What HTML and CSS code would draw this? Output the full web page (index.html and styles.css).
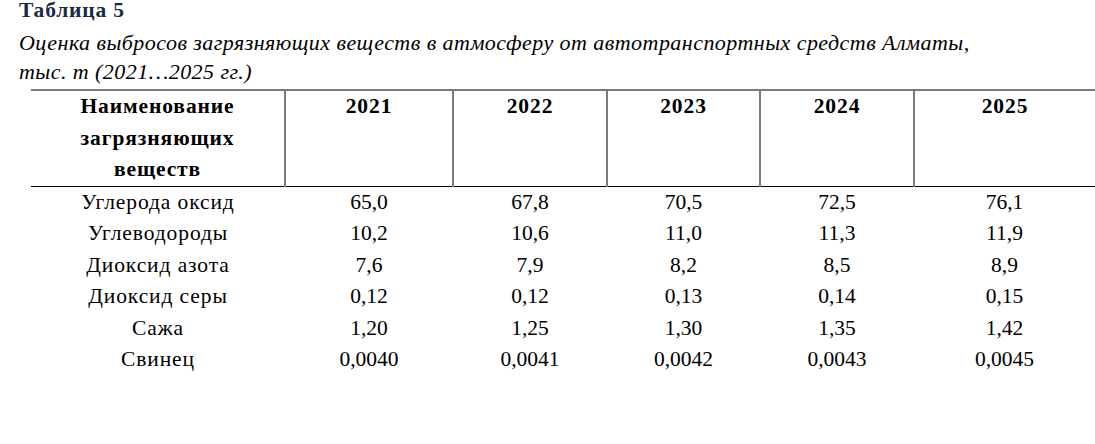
FILE: index.html
```html
<!DOCTYPE html>
<html lang="ru">
<head>
<meta charset="utf-8">
<title>Таблица 5</title>
<link rel="stylesheet" href="styles.css">
</head>
<body>
<div class="page">
  <div class="title">Таблица 5</div>
  <div class="caption">Оценка выбросов загрязняющих веществ в атмосферу от автотранспортных средств Алматы,<br>тыс. т (2021…2025 гг.)</div>
  <table class="data">
    <colgroup>
      <col class="c-name"><col class="c-y1"><col class="c-y2"><col class="c-y3"><col class="c-y4"><col class="c-y5">
    </colgroup>
    <thead>
      <tr>
        <th>Наименование загрязняющих веществ</th>
        <th>2021</th>
        <th>2022</th>
        <th>2023</th>
        <th>2024</th>
        <th>2025</th>
      </tr>
    </thead>
    <tbody>
      <tr><td class="name">Углерода оксид</td><td>65,0</td><td>67,8</td><td>70,5</td><td>72,5</td><td>76,1</td></tr>
      <tr><td class="name">Углеводороды</td><td>10,2</td><td>10,6</td><td>11,0</td><td>11,3</td><td>11,9</td></tr>
      <tr><td class="name">Диоксид азота</td><td>7,6</td><td>7,9</td><td>8,2</td><td>8,5</td><td>8,9</td></tr>
      <tr><td class="name">Диоксид серы</td><td>0,12</td><td>0,12</td><td>0,13</td><td>0,14</td><td>0,15</td></tr>
      <tr><td class="name">Сажа</td><td>1,20</td><td>1,25</td><td>1,30</td><td>1,35</td><td>1,42</td></tr>
      <tr><td class="name">Свинец</td><td>0,0040</td><td>0,0041</td><td>0,0042</td><td>0,0043</td><td>0,0045</td></tr>
    </tbody>
  </table>
</div>
</body>
</html>
```

FILE: styles.css
```css
html, body {
  margin: 0;
  padding: 0;
  background: #ffffff;
}

.page {
  padding: 0 0 0 19px;
  font-family: "Liberation Serif", serif;
  color: #000;
}

.title {
  font-weight: bold;
  font-size: 21.5px;
  line-height: 20px;
  color: #1b2a47;
  margin-top: 0;
  letter-spacing: 0.8px;
}

.caption {
  font-style: italic;
  font-size: 22px;
  line-height: 29px;
  margin-top: 8px;
  letter-spacing: 0.45px;
}

.data {
  margin-left: 12px;
  width: 1064px;
  border-collapse: collapse;
  table-layout: fixed;
  font-family: "Liberation Serif", serif;
  font-size: 21.5px;
  margin-top: 3px;
}

.c-name { width: 254px; }
.c-y1 { width: 168px; }
.c-y2 { width: 154px; }
.c-y3 { width: 153px; }
.c-y4 { width: 154px; }
.c-y5 { width: auto; }

.data thead th {
  border-top: 2px solid #7a7a7a;
  border-bottom: 1px solid #000;
  border-left: 2px solid #7a7a7a;
  font-weight: bold;
  vertical-align: top;
  text-align: center;
  line-height: 31.5px;
  height: 94px;
  padding: 0 40px;
  letter-spacing: 0.9px;
}

.data thead th:first-child {
  border-left: none;
}

.data tbody td {
  text-align: center;
  line-height: 31.5px;
  padding: 0;
}

.data tbody td.name {
  letter-spacing: 0.9px;
}
```
